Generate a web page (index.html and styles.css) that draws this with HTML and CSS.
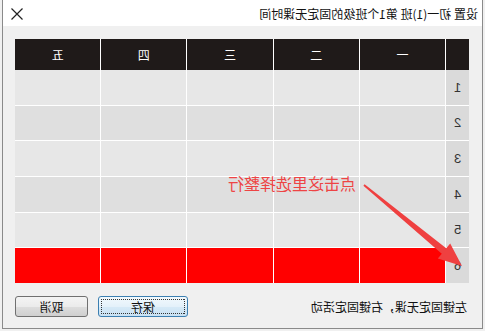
FILE: index.html
```html
<!DOCTYPE html>
<html lang="zh">
<head>
<meta charset="utf-8">
<title>设置固定无课时间</title>
<link rel="stylesheet" href="styles.css">
</head>
<body>
<div class="window">
  <div class="titlebar">
    <span class="title">设置 初一(1)班 第1个班级的固定无课时间</span>
    <svg class="close" width="12" height="12" viewBox="0 0 12 12"><path d="M0.5 0.5 L11.5 11.5 M11.5 0.5 L0.5 11.5" stroke="#222" stroke-width="1.2" fill="none"/></svg>
  </div>
  <div class="content">
    <div class="grid">
      <div class="hd corner"></div>
      <div class="hd">一</div><div class="hd">二</div><div class="hd">三</div><div class="hd">四</div><div class="hd">五</div>

      <div class="rh">1</div><div class="c odd"></div><div class="c odd"></div><div class="c odd"></div><div class="c odd"></div><div class="c odd"></div>
      <div class="rh">2</div><div class="c even"></div><div class="c even"></div><div class="c even"></div><div class="c even"></div><div class="c even"></div>
      <div class="rh">3</div><div class="c odd"></div><div class="c odd"></div><div class="c odd"></div><div class="c odd"></div><div class="c odd"></div>
      <div class="rh">4</div><div class="c even"></div><div class="c even"></div><div class="c even"></div><div class="c even"></div><div class="c even"></div>
      <div class="rh">5</div><div class="c odd"></div><div class="c odd"></div><div class="c odd"></div><div class="c odd"></div><div class="c odd"></div>
      <div class="rh">6</div><div class="c sel"></div><div class="c sel"></div><div class="c sel"></div><div class="c sel"></div><div class="c sel"></div>
    </div>
    <div class="footer">
      <span class="hint">左键固定无课，右键固定活动</span>
      <div class="buttons">
        <button class="btn save"><span class="focus">保存</span></button>
        <button class="btn cancel">取消</button>
      </div>
    </div>
  </div>
  <div class="annotation">
    <span class="note">点击这里选择整行</span>
    <svg class="arrow" width="485" height="331" viewBox="0 0 485 331">
      <polygon points="120.6,185.8 42.2,253.7 46.2,258.4 22,266 33.8,243.6 37.8,248.3 119.4,184.2" fill="#ef4040"/>
    </svg>
  </div>
</div>
</body>
</html>
```
FILE: styles.css
```css
html, body {
  margin: 0;
  padding: 0;
}
body {
  width: 485px;
  height: 331px;
  overflow: hidden;
  background: #f0f0f0;
  font-family: "Noto Sans CJK SC", "Noto Sans", sans-serif;
  font-size: 12px;
  color: #111;
  transform: scaleX(-1);
}
.window {
  position: relative;
  margin-left: 2px;
  width: 479px;
  height: 328px;
  border: 1px solid #8a8a8a;
  border-top: none;
  background: #f0f0f0;
}
.titlebar {
  height: 26px;
  background: #ffffff;
  display: flex;
  align-items: center;
  justify-content: space-between;
  padding: 0 8px 0 4px;
}
.title {
  font-size: 12px;
  line-height: 14px;
  padding-top: 2px;
  letter-spacing: 0;
}
.close {
  display: block;
  margin-top: 2px;
}
.content {
  padding: 13px 12px 0 13px;
}
.grid {
  width: 454px;
  display: grid;
  grid-template-columns: 23px repeat(5, 1fr);
  grid-template-rows: 30px repeat(6, 34.66px);
  column-gap: 1px;
  row-gap: 1px;
  background: #ffffff;
}
.hd {
  background: #1f1a19;
  color: #ffffff;
  display: flex;
  align-items: center;
  justify-content: center;
  font-size: 12px;
}
.grid .hd:first-child + .hd,
.hd {
  margin-bottom: -1px;
}
.rh {
  background: #dadada;
  display: flex;
  align-items: center;
  justify-content: center;
  font-family: "Liberation Sans", sans-serif;
  font-size: 13px;
  color: #333;
}
.c.odd { background: #e7e7e7; }
.c.even { background: #dfdfdf; }
.c.sel { background: #ff0000; }
.footer {
  margin-top: 13px;
  height: 21px;
  display: flex;
  align-items: center;
  justify-content: space-between;
}
.hint {
  padding-left: 2px;
  font-size: 12px;
}
.buttons {
  display: flex;
  gap: 10px;
}
.btn {
  height: 21px;
  padding: 0;
  border: 1px solid #707070;
  border-radius: 3px;
  background: linear-gradient(#f4f4f4, #ebebeb 50%, #dddddd 51%, #cfcfcf);
  font-family: "Noto Sans CJK SC", sans-serif;
  font-size: 12px;
  color: #111;
  display: flex;
  align-items: center;
  justify-content: center;
}
.btn.save {
  width: 90px;
  border-color: #3c7fb1;
  background: linear-gradient(#f2f9fd, #e4f1fa 50%, #d6eaf7 51%, #c8e1f3);
  padding: 2px;
}
.btn.save .focus {
  flex: 1;
  align-self: stretch;
  border: 1px dotted #333;
  display: flex;
  align-items: center;
  justify-content: center;
}
.btn.cancel {
  width: 73px;
}
.annotation {
  position: absolute;
  left: -2px;
  top: 0;
  width: 485px;
  height: 331px;
  pointer-events: none;
}
.note {
  position: absolute;
  left: 128px;
  top: 173px;
  font-size: 16px;
  line-height: 20px;
  color: #ee4444;
}
.arrow {
  position: absolute;
  left: 0;
  top: 0;
}
```
